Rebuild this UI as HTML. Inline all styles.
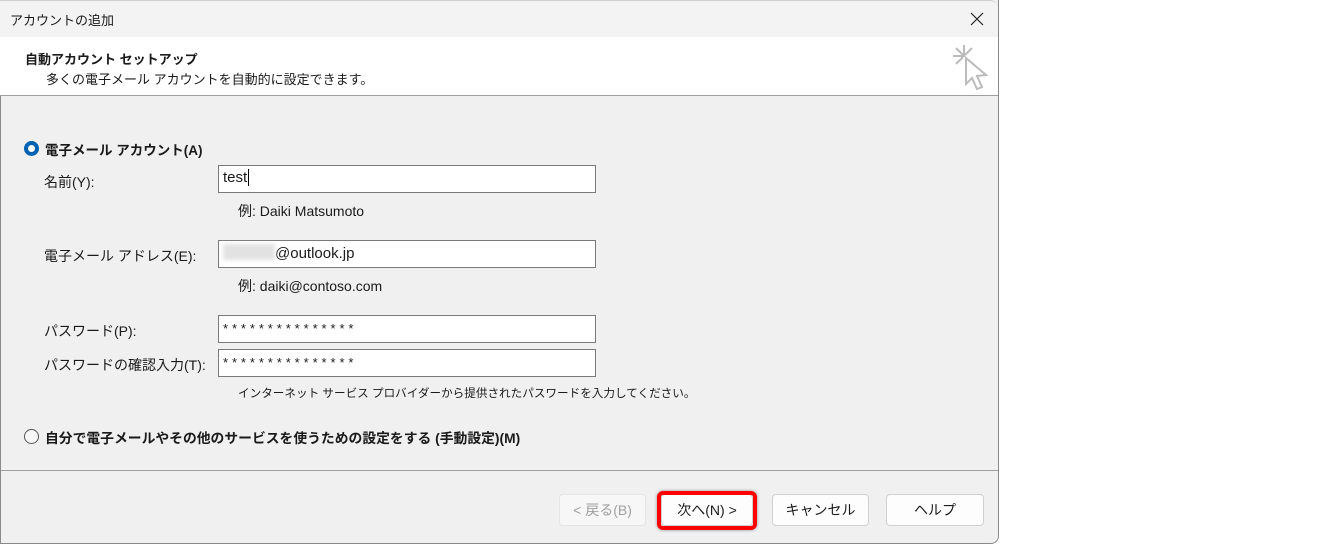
<!DOCTYPE html>
<html><head><meta charset="utf-8"><style>
*{margin:0;padding:0;box-sizing:border-box}
body{width:1344px;height:544px;background:#fff;position:relative;overflow:hidden;font-family:"Liberation Sans","Noto Sans CJK JP",sans-serif;font-size:14px;color:#1a1a1a}
.dlg{position:absolute;left:0;top:0;width:999px;height:544px;background:#f0f0f0;border:1px solid #8a8a8a;border-top:none;border-radius:0 0 8px 0}
.tb{position:absolute;left:0;top:0;width:998px;height:37px;background:#f3f3f3;border-top:1px solid #cfcfcf;border-radius:0 8px 0 0}
.hd{position:absolute;left:0;top:37px;width:998px;height:59px;background:#fff;border-bottom:1px solid #a0a0a0}
.t{position:absolute;white-space:nowrap}
.in{position:absolute;left:218px;width:378px;height:28px;background:#fff;border:1px solid #7a7a7a;font-size:15px;padding:3px 4px}
.pw{font-size:13px;letter-spacing:3.9px;padding-top:5px}
.btn{position:absolute;top:494px;height:32px;background:#fdfdfd;border:1px solid #d0d0d0;border-radius:4px;text-align:center;line-height:30px;font-size:14px}
</style></head><body>
<div class="dlg"></div>
<div class="tb"></div>
<div class="t" style="left:10px;top:10px;font-size:13px">アカウントの追加</div>
<svg style="position:absolute;left:970px;top:12px" width="14" height="14" viewBox="0 0 14 14" stroke="#222" stroke-width="1.2"><path d="M1 1L13 13M13 1L1 13"/></svg>
<div class="hd"></div>
<div class="t" style="left:25px;top:49px;font-weight:bold;font-size:13px">自動アカウント セットアップ</div>
<div class="t" style="left:46px;top:69px;font-size:13px">多くの電子メール アカウントを自動的に設定できます。</div>
<svg style="position:absolute;left:950px;top:42px" width="40" height="52" viewBox="0 0 40 52" fill="none" stroke="#bbb" stroke-width="2">
<path d="M14 3v12M3 14h12M6 6l7 7M22 6l-7 7M6 22l7-7"/>
<path d="M16 16l0 26l6-6l5 11l5-2l-5-11l9-1z" fill="#fff"/></svg>
<div style="position:absolute;left:24px;top:141px;width:15px;height:15px;border-radius:50%;background:#0063b1"><div style="position:absolute;left:4px;top:4px;width:7px;height:7px;border-radius:50%;background:#fff"></div></div>
<div class="t" style="left:45px;top:139px;font-weight:bold;font-size:13.5px">電子メール アカウント(A)</div>
<div class="t" style="left:44px;top:172px">名前(Y):</div>
<div class="in" style="top:165px">test<span style="border-left:1px solid #000;margin-left:1px"></span></div>
<div class="t" style="left:238px;top:201px">例: Daiki Matsumoto</div>
<div class="t" style="left:44px;top:246px">電子メール アドレス(E):</div>
<div class="in" style="top:240px"><span style="display:inline-block;width:52px;height:16px;background:#e2e2e2;vertical-align:-2px;filter:blur(2px)"></span>@outlook.jp</div>
<div class="t" style="left:238px;top:276px">例: daiki@contoso.com</div>
<div class="t" style="left:44px;top:321px">パスワード(P):</div>
<div class="in pw" style="top:315px">***************</div>
<div class="t" style="left:44px;top:355px">パスワードの確認入力(T):</div>
<div class="in pw" style="top:349px">***************</div>
<div class="t" style="left:238px;top:385px;font-size:11.6px">インターネット サービス プロバイダーから提供されたパスワードを入力してください。</div>
<div style="position:absolute;left:24px;top:429px;width:15px;height:15px;border-radius:50%;border:1px solid #555;background:#f8f8f8"></div>
<div class="t" style="left:45px;top:427px;font-weight:bold;font-size:13.8px">自分で電子メールやその他のサービスを使うための設定をする (手動設定)(M)</div>
<div style="position:absolute;left:1px;top:470px;width:997px;height:1px;background:#a0a0a0"></div>
<div class="btn" style="left:559px;width:87px;color:#a0a0a0;background:#f7f7f7;border-color:#e5e5e5">&lt; 戻る(B)</div>
<div class="btn" style="left:661px;width:92px">次へ(N) &gt;</div>
<div style="position:absolute;left:657px;top:491px;width:100px;height:39px;border:4px solid #f00;border-radius:6px;box-shadow:0 0 3px rgba(0,0,0,.4)"></div>
<div class="btn" style="left:772px;width:97px">キャンセル</div>
<div class="btn" style="left:886px;width:98px">ヘルプ</div>
</body></html>
